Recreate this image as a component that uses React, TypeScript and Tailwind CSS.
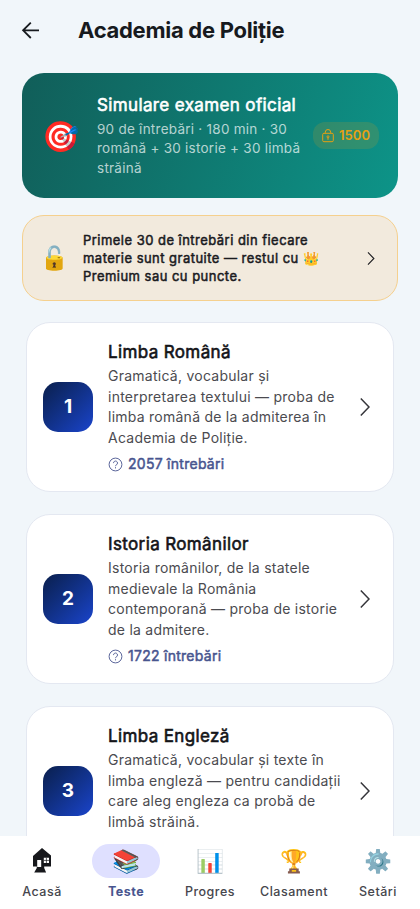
import type { ReactNode } from "react";

const subjects: { name: string; description: string; questions?: number }[] = [
  {
    name: "Limba Română",
    description:
      "Gramatică, vocabular și interpretarea textului — proba de limba română de la admiterea în Academia de Poliție.",
    questions: 2057,
  },
  {
    name: "Istoria Românilor",
    description:
      "Istoria românilor, de la statele medievale la România contemporană — proba de istorie de la admitere.",
    questions: 1722,
  },
  {
    name: "Limba Engleză",
    description:
      "Gramatică, vocabular și texte în limba engleză — pentru candidații care aleg engleza ca probă de limbă străină.",
  },
];

function Chevron({ className }: { className: string }) {
  return (
    <svg viewBox="0 0 10 18" fill="none" stroke="currentColor" className={className}>
      <path d="M0.8 0.6 9 9 0.8 17.4" strokeWidth="1.5" />
    </svg>
  );
}

function HouseIcon() {
  return (
    <svg width="20" height="26" viewBox="0 0 20 26" className="text-[#17181c]">
      <path fill="currentColor" d="M10 0 19 7.6v10.9h-6.8v1.6l1.9 4.4H2.2l2.6-4.4v-1.6H1V8.1Z" />
      <path fill="#fff" d="M5.2 12h4v7h-4zM11.8 9.8H17v5.3h-5.2z" />
      <path d="M14.4 9.8v5.3M11.8 12.4H17" stroke="currentColor" strokeWidth="0.7" />
    </svg>
  );
}

function Header() {
  return (
    <header className="flex h-[73px] shrink-0 items-start pt-[17px] pl-[18px]">
      <svg width="24" height="26" viewBox="0 0 24 26" fill="none" stroke="#171a1e" strokeWidth="1.8" className="shrink-0">
        <path d="M21 13.3H5.2M12.8 5.6 5.1 13.3l7.7 7.7" />
      </svg>
      <h1 className="ml-9 text-[22px] leading-[27px] font-bold tracking-[-0.28px] text-[#171a1e]">
        Academia de Poliție
      </h1>
    </header>
  );
}

function ExamCard() {
  return (
    <section className="mx-[22px] flex h-[125px] shrink-0 items-center rounded-[22px] bg-linear-[108deg] from-[#115e59] to-[#0d9488] pr-[19px] pl-5">
      <span className="w-[55px] shrink-0 text-[30px] leading-9">🎯</span>
      <div className="w-[216px] shrink-0">
        <h2 className="text-[17px] leading-6 tracking-[0.37px] whitespace-nowrap text-white [-webkit-text-stroke:0.6px]">
          Simulare examen oficial
        </h2>
        <p className="mt-[3px] w-[208px] text-[13.5px] leading-[19.5px] tracking-[0.25px] text-white/70">
          90 de întrebări · 180 min · 30 română + 30 istorie + 30 limbă străină
        </p>
      </div>
      <div className="flex h-[27px] w-[66px] shrink-0 items-center justify-center gap-[5px] rounded-[12px] bg-[#f59e0b]/15 text-[#e5a013]">
        <svg width="12" height="14" viewBox="0 0 12 14" fill="none" stroke="currentColor" strokeWidth="1">
          <rect x="0.7" y="4.3" width="10.6" height="8.4" rx="1.2" />
          <path d="M3.3 4.3V3.2a2.7 2.7 0 0 1 5.4 0v1.1M6 8.6v2.2" />
          <circle cx="6" cy="7.8" r="1" />
        </svg>
        <span className="text-[13px] font-semibold tracking-[0.1px]">1500</span>
      </div>
    </section>
  );
}

function FreeBanner() {
  return (
    <section className="mx-[22px] mt-[17px] flex h-[86px] shrink-0 items-center rounded-[22px] border border-[#f5d08e] bg-[#f2eadd] pr-[22px] pl-[17px] text-[#1b1b1f]">
      <span className="w-[43px] shrink-0 text-[23px] leading-7">🔓</span>
      <p className="w-[245px] text-[13px] leading-[18.2px] tracking-[0.47px] [-webkit-text-stroke:0.5px]">
        Primele 30 de întrebări din fiecare materie sunt gratuite — restul cu 👑 Premium sau cu puncte.
      </p>
      <Chevron className="ml-auto h-[13px] w-[8px]" />
    </section>
  );
}

function SubjectCard({ index, subject }: { index: number; subject: (typeof subjects)[number] }) {
  return (
    <article className="mx-[26px] mb-[22px] flex h-[170px] shrink-0 items-center rounded-[24px] border border-[#e4e8f1] bg-white pr-[23px] pl-4">
      <div className="flex size-[50px] shrink-0 items-center justify-center rounded-[15px] bg-linear-to-br from-[#0a1f4d] to-[#1a44cc] text-[19px] font-bold text-white">
        {index}
      </div>
      <div className="ml-[15px] w-[238px] shrink-0 self-start pt-[17px]">
        <h2 className="text-[17px] leading-6 tracking-[0.37px] text-[#141418] [-webkit-text-stroke:0.6px]">
          {subject.name}
        </h2>
        <p className="mt-[2px] text-sm leading-[20.5px] tracking-[0.25px] text-[#4b4b50]">{subject.description}</p>
        {subject.questions && (
          <div className="mt-[6px] flex items-center gap-[5px] text-[#48558f]">
            <svg width="15" height="15" viewBox="0 0 15 15" fill="none" stroke="currentColor" strokeWidth="0.9">
              <circle cx="7.5" cy="7.5" r="6.4" />
              <path d="M5.5 6.1a2 2 0 1 1 3.1 1.6c-.7.4-1.1.8-1.1 1.5M7.5 10.2v1.2" />
            </svg>
            <span className="text-sm leading-5 tracking-[0.27px] [-webkit-text-stroke:0.5px]">
              {subject.questions} întrebări
            </span>
          </div>
        )}
      </div>
      <Chevron className="ml-auto h-[18px] w-[10px] text-[#35353a]" />
    </article>
  );
}

const tabs: { label: string; icon: ReactNode; active?: boolean }[] = [
  { label: "Acasă", icon: <HouseIcon /> },
  { label: "Teste", icon: "📚", active: true },
  { label: "Progres", icon: "📊" },
  { label: "Clasament", icon: "🏆" },
  { label: "Setări", icon: "⚙️" },
];

function TabBar() {
  return (
    <nav className="flex h-[73px] shrink-0 bg-white pt-2">
      {tabs.map((tab) => (
        <div key={tab.label} className="flex w-1/5 flex-col items-center">
          <div
            className={`flex h-[34px] w-[68px] items-center justify-center rounded-full text-[22.5px] leading-none ${
              tab.active ? "bg-[#dfe0ff]" : ""
            }`}
          >
            {tab.icon}
          </div>
          <span
            className={`mt-[5px] text-[12.5px] leading-[18px] tracking-[0.5px] ${
              tab.active ? "font-bold text-[#48558f]" : "font-medium text-[#46464d]"
            }`}
          >
            {tab.label}
          </span>
        </div>
      ))}
    </nav>
  );
}

export default function App() {
  return (
    <div className="flex h-[909px] w-[420px] flex-col overflow-hidden bg-[#f1f6fa] font-['Inter','Noto_Color_Emoji',sans-serif]">
      <main className="flex min-h-0 flex-1 flex-col overflow-hidden">
        <Header />
        <ExamCard />
        <FreeBanner />
        <div className="mt-[21px] flex flex-col">
          {subjects.map((subject, i) => (
            <SubjectCard key={subject.name} index={i + 1} subject={subject} />
          ))}
        </div>
      </main>
      <TabBar />
    </div>
  );
}
